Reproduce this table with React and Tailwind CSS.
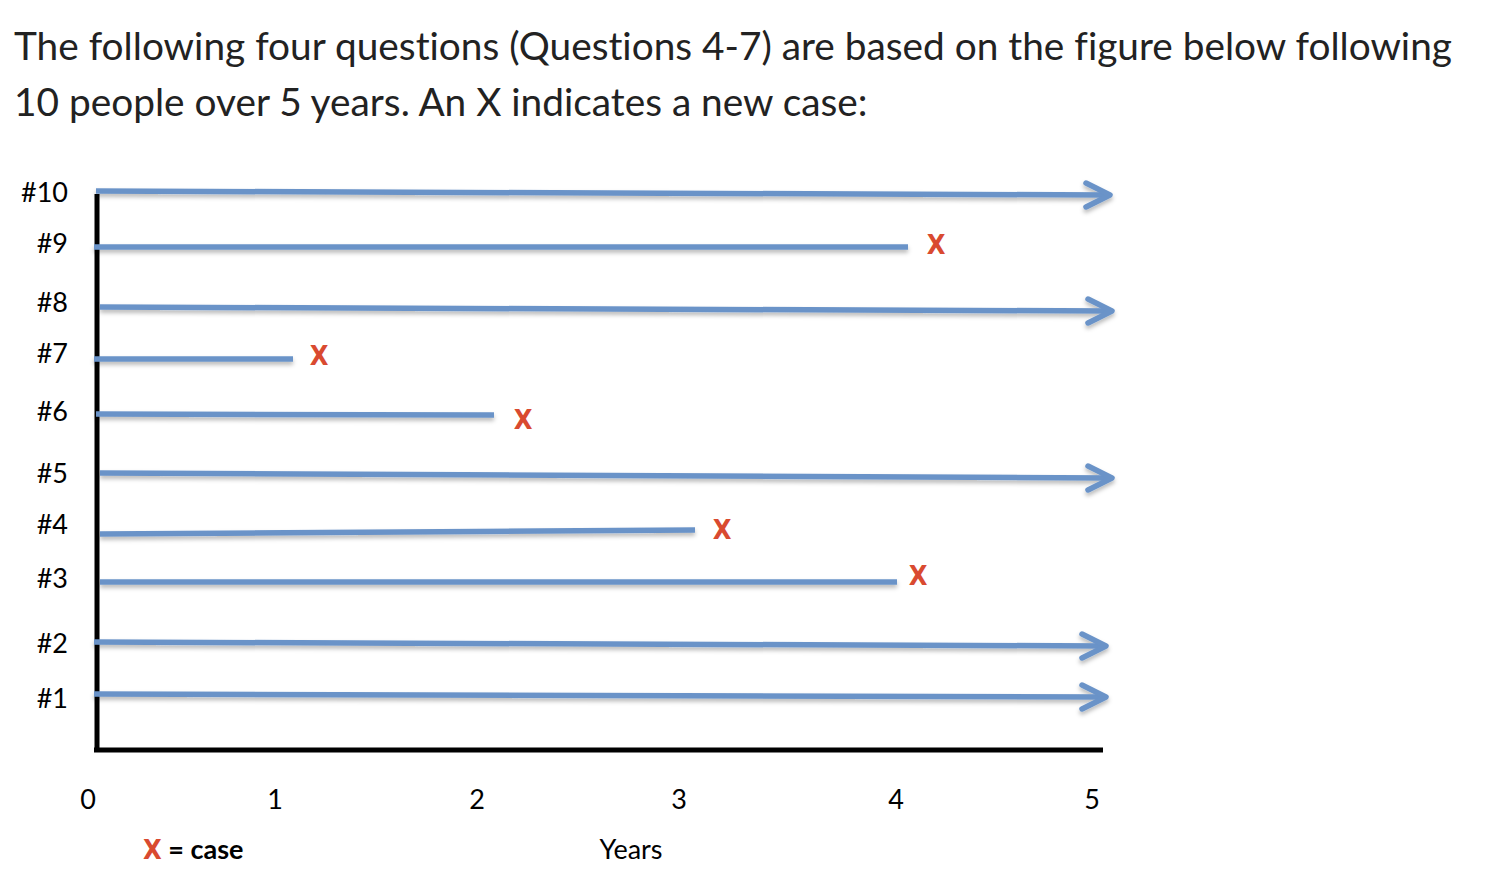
const rows = [
  { label: "#10", ly: 193, x1: 96, y1: 192, x2: 1108, y2: 196, arrow: true },
  { label: "#9", ly: 244, x1: 94, y1: 248, x2: 908, y2: 248, mark: [936, 245] },
  { label: "#8", ly: 303, x1: 100, y1: 308, x2: 1110, y2: 312, arrow: true },
  { label: "#7", ly: 354, x1: 94, y1: 360, x2: 293, y2: 360, mark: [319, 356] },
  { label: "#6", ly: 412, x1: 96, y1: 415, x2: 494, y2: 416, mark: [523, 420] },
  { label: "#5", ly: 474, x1: 100, y1: 474, x2: 1110, y2: 479, arrow: true },
  { label: "#4", ly: 525, x1: 100, y1: 535, x2: 695, y2: 531, mark: [722, 530] },
  { label: "#3", ly: 579, x1: 100, y1: 583, x2: 897, y2: 583, mark: [918, 576] },
  { label: "#2", ly: 644, x1: 94, y1: 643, x2: 1104, y2: 647, arrow: true },
  { label: "#1", ly: 699, x1: 94, y1: 695, x2: 1104, y2: 698, arrow: true },
];

const ticks = [
  ["0", 88],
  ["1", 275],
  ["2", 477],
  ["3", 679],
  ["4", 896],
  ["5", 1092],
];

const BLUE = "#6a93c8";
const RED = "#d94a30";

function Chart() {
  return (
    <svg
      width="1120"
      height="705"
      viewBox="0 170 1120 705"
      className="block font-['Lato','Open_Sans',sans-serif]"
    >
      <defs>
        <filter id="shade" filterUnits="userSpaceOnUse" x="0" y="150" width="1200" height="700">
          <feDropShadow dx="0" dy="3" stdDeviation="2" floodColor="#000" floodOpacity="0.28" />
        </filter>
      </defs>

      {/* axes */}
      <line x1="97" y1="195" x2="97" y2="753" stroke="#000" strokeWidth="5" />
      <line x1="94" y1="751" x2="1103" y2="751" stroke="#000" strokeWidth="5" />

      {rows.map((r) => (
        <g key={r.label}>
          <text x="68" y={r.ly + 10} textAnchor="end" fontSize="27" fill="#000">
            {r.label}
          </text>
          <g filter="url(#shade)" stroke={BLUE} strokeWidth="5.5" fill="none">
            <line x1={r.x1} y1={r.y1} x2={r.x2} y2={r.y2} />
            {r.arrow && (
              <polyline
                points={`${r.x2 - 22},${r.y2 - 12} ${r.x2 + 2},${r.y2} ${r.x2 - 22},${r.y2 + 12}`}
                strokeLinecap="round"
                strokeLinejoin="round"
              />
            )}
          </g>
          {r.mark && (
            <text
              x={r.mark[0]}
              y={r.mark[1] + 10}
              textAnchor="middle"
              fontSize="27"
              fontWeight="700"
              fill={RED}
              className="font-['DejaVu_Sans_Condensed','Lato',sans-serif]"
            >
              X
            </text>
          )}
        </g>
      ))}

      {ticks.map(([t, x]) => (
        <text key={t} x={x} y="810" textAnchor="middle" fontSize="27" fill="#000">
          {t}
        </text>
      ))}

      <text x="143" y="860" fontSize="27" fontWeight="700" fill="#000">
        <tspan fill={RED} className="font-['DejaVu_Sans_Condensed','Lato',sans-serif]">
          X
        </tspan>{" "}
        = case
      </text>
      <text x="631" y="860" textAnchor="middle" fontSize="27" fill="#000">
        Years
      </text>
    </svg>
  );
}

export default function App() {
  return (
    <div className="min-h-screen bg-white font-['Lato','Open_Sans',sans-serif]">
      <p className="pl-[14px] pr-4 pt-[17px] text-[38.8px] leading-[56px] text-[#222] [font-variant-ligatures:none]">
        The following four questions (Questions 4-7) are based on the figure below following
        10 people over 5 years. An X indicates a new case:
      </p>
      <div className="mt-[40px]">
        <Chart />
      </div>
    </div>
  );
}
